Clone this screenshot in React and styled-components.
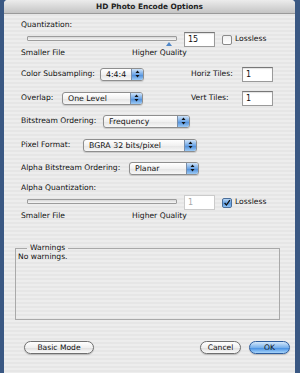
import React from 'react'
import styled, { createGlobalStyle, css } from 'styled-components'

const Global = createGlobalStyle`
  html, body { margin: 0; padding: 0; background: #3a5883; }
  body { font-family: "DejaVu Sans", "Liberation Sans", sans-serif; }
`

function Slider({ value, disabled, checked, thumb }) {
  return (
    <SliderRow>
      <TrackWrap>
        <Track />
        {thumb && <Thumb />}
      </TrackWrap>
      <NumberBox $disabled={disabled}>{value}</NumberBox>
      <Check $checked={checked}>
        {checked && (
          <svg width="10" height="10" viewBox="0 0 10 10">
            <path d="M2 5 L4.3 7.6 L8.6 1.4" fill="none" stroke="#111" strokeWidth="1.6" />
          </svg>
        )}
      </Check>
      <Text>Lossless</Text>
    </SliderRow>
  )
}

function Popup({ w, children }) {
  return (
    <Select $w={w}>
      <SelectText>{children}</SelectText>
      <Arrows>
        <svg width="5" height="8" viewBox="0 0 5 8">
          <path d="M2.5 0.5 L4.5 3 L0.5 3 Z M2.5 7.5 L4.5 5 L0.5 5 Z" fill="#111" />
        </svg>
      </Arrows>
    </Select>
  )
}

function App() {
  return (
    <>
      <Global />
      <Page>
        <Window>
          <TitleBar>HD Photo Encode Options</TitleBar>
          <Content>
            <Row $h={12} $mt={5}><Text>Quantization:</Text></Row>
            <Slider value="15" thumb />
            <Scale>
              <Text>Smaller File</Text>
              <Text>Higher Quality</Text>
            </Scale>

            <Row $h={14} $mt={8}>
              <Label $w={79}>Color Subsampling:</Label>
              <Popup w={44}>4:4:4</Popup>
              <TileLabel>Horiz Tiles:</TileLabel>
              <TileBox>1</TileBox>
            </Row>
            <Row $h={14} $mt={10}>
              <Label $w={41}>Overlap:</Label>
              <Popup w={81}>One Level</Popup>
              <TileLabel>Vert Tiles:</TileLabel>
              <TileBox>1</TileBox>
            </Row>
            <Row $h={14} $mt={9}>
              <Label $w={82}>Bitstream Ordering:</Label>
              <Popup w={87}>Frequency</Popup>
            </Row>
            <Row $h={14} $mt={10}>
              <Label $w={62}>Pixel Format:</Label>
              <Popup w={114}>BGRA 32 bits/pixel</Popup>
            </Row>
            <Row $h={14} $mt={9}>
              <Label $w={108}>Alpha Bitstream Ordering:</Label>
              <Popup w={70}>Planar</Popup>
            </Row>

            <Row $h={12} $mt={7}><Text>Alpha Quantization:</Text></Row>
            <Slider value="1" disabled checked />
            <Scale>
              <Text>Smaller File</Text>
              <Text>Higher Quality</Text>
            </Scale>

            <Group>
              <Legend>Warnings</Legend>
              <Text>No warnings.</Text>
            </Group>

            <Buttons>
              <Button $w={70}>Basic Mode</Button>
              <Spacer />
              <Button $w={41}>Cancel</Button>
              <Button $w={41} $default>OK</Button>
            </Buttons>
          </Content>
        </Window>
      </Page>
    </>
  )
}

export default App

const Page = styled.div`
  width: 300px;
  height: 373px;
  padding-left: 4px;
  box-sizing: border-box;
  overflow: hidden;
`

const Window = styled.div`
  width: 291px;
  height: 373px;
  border-radius: 4px 4px 0 0;
  overflow: hidden;
  background: repeating-linear-gradient(to bottom, #ededed 0, #ededed 2px, #e6e6e6 2px, #e6e6e6 4px);
  color: #111;
  font-size: 7.6px;
`

const TitleBar = styled.div`
  height: 13px;
  line-height: 13px;
  text-align: center;
  font-weight: bold;
  font-size: 7.4px;
  color: #222;
  background: linear-gradient(to bottom, #ececec, #d4d4d4 60%, #c4c4c4);
  border-bottom: 1px solid #9a9a9a;
`

const Content = styled.div`
  padding: 0 5px 0 17px;
  display: flex;
  flex-direction: column;
`

const Row = styled.div`
  display: flex;
  align-items: center;
  height: ${p => p.$h}px;
  margin-top: ${p => p.$mt || 0}px;
`

const Text = styled.span`
  white-space: nowrap;
  line-height: 1;
`

const Label = styled(Text)`
  width: ${p => p.$w}px;
  flex: none;
`

const TileLabel = styled(Label)`
  width: 51px;
  margin-left: auto;
`

const SliderRow = styled.div`
  display: flex;
  align-items: center;
  height: 16px;
`

const TrackWrap = styled.div`
  position: relative;
  width: 150px;
  height: 16px;
  margin-left: 6px;
  display: flex;
  align-items: center;
`

const Track = styled.div`
  width: 100%;
  height: 5px;
  margin-top: -1px;
  box-sizing: border-box;
  border: 1px solid #9c9c9c;
  border-radius: 1px;
  background: linear-gradient(to bottom, #d8d8d8, #f6f6f6);
`

const Thumb = styled.div`
  position: absolute;
  left: 139px;
  top: 11px;
  width: 0;
  height: 0;
  border-left: 3px solid transparent;
  border-right: 3px solid transparent;
  border-bottom: 4px solid #4f87c8;
`

const NumberBox = styled.div`
  width: 31px;
  height: 15px;
  flex: none;
  box-sizing: border-box;
  margin-left: 7px;
  padding-left: 3px;
  display: flex;
  align-items: center;
  background: #fff;
  border: 1px solid #9a9a9a;
  border-top-color: #777;
  box-shadow: inset 0 1px 1px rgba(0, 0, 0, 0.12);
  font-size: 8px;
  ${p => p.$disabled && css`
    color: #a8a8a8;
    border-color: #cbcbcb;
    box-shadow: none;
  `}
`

const TileBox = styled(NumberBox)`
  margin-left: 0;
  margin-right: 17px;
`

const Check = styled.div`
  width: 10px;
  height: 10px;
  flex: none;
  box-sizing: border-box;
  margin: 1px 3px 0 7px;
  border: 1px solid #8a8a8a;
  border-radius: 2px;
  display: flex;
  align-items: center;
  justify-content: center;
  background: ${p => p.$checked
    ? 'linear-gradient(to bottom, #b9d6f3, #5d9be0 55%, #8fc2f3)'
    : 'linear-gradient(to bottom, #f0f0f0, #ffffff)'};
  ${p => p.$checked && css`border-color: #4a6e9a;`}
`

const Scale = styled.div`
  display: flex;
  height: 12px;
  align-items: center;
  & > span:first-child { width: 111px; }
`

const Select = styled.div`
  width: ${p => p.$w}px;
  height: 13px;
  flex: none;
  box-sizing: border-box;
  display: flex;
  border: 1px solid #8e8e8e;
  border-radius: 3px;
  overflow: hidden;
  background: linear-gradient(to bottom, #ffffff, #f1f1f1 50%, #e4e4e4 51%, #f7f7f7);
  box-shadow: 0 1px 1px rgba(0, 0, 0, 0.15);
`

const SelectText = styled.div`
  flex: 1;
  padding-left: 5px;
  display: flex;
  align-items: center;
  white-space: nowrap;
  font-size: 7.8px;
`

const Arrows = styled.div`
  width: 11px;
  display: flex;
  align-items: center;
  justify-content: center;
  border-left: 1px solid #7a8ea8;
  background: linear-gradient(to bottom, #cfe3f8, #6ea6e6 50%, #4a8ad8 51%, #9ccaf5);
`

const Group = styled.fieldset`
  margin: 21px 10px 0 -6px;
  padding: 0 2px;
  height: 77px;
  box-sizing: border-box;
  border: 1px solid #a9a9a9;
  display: flex;
  flex-direction: column;
`

const Legend = styled.legend`
  margin-left: 9px;
  padding: 0 3px;
  font-size: 7.6px;
  line-height: 10px;
`

const Buttons = styled.div`
  display: flex;
  align-items: center;
  gap: 8px;
  margin-top: 20px;
  margin-left: 3px;
  height: 14px;
`

const Spacer = styled.div`
  flex: 1;
`

const Button = styled.div`
  width: ${p => p.$w}px;
  height: 13px;
  box-sizing: border-box;
  border-radius: 7px;
  border: 1px solid #6f6f6f;
  display: flex;
  align-items: center;
  justify-content: center;
  font-size: 7.6px;
  background: linear-gradient(to bottom, #ffffff, #f0f0f0 50%, #dedede 51%, #fafafa);
  box-shadow: 0 1px 1px rgba(0, 0, 0, 0.2);
  ${p => p.$default && css`
    border-color: #2d5c9c;
    background: linear-gradient(to bottom, #d4e8fb, #79b1ec 50%, #3f8ae0 51%, #a6d4fb);
  `}
`
